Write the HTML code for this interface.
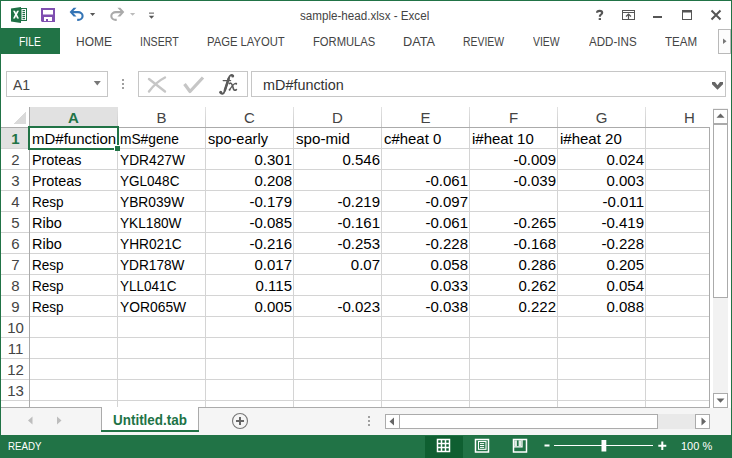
<!DOCTYPE html>
<html><head><meta charset="utf-8">
<style>
html,body{margin:0;padding:0}
body{width:732px;height:458px;overflow:hidden;position:relative;background:#fff;font-family:"Liberation Sans", sans-serif}
div{position:absolute;white-space:nowrap}
.hd{height:20px;line-height:23px;text-align:center;font-size:15px;line-height:21px}
.rh{left:1px;width:29px;height:20px;line-height:23px;text-align:center;font-size:15px;line-height:21px}
.c{height:20px;line-height:22px;font-size:15px;color:#000}
.tab{top:29px;height:26px;line-height:27px;font-size:12.5px;color:#444}
</style></head><body>
<svg width="732" height="458" style="position:absolute;left:0;top:0" shape-rendering="crispEdges">
<defs><linearGradient id="hg" x1="0" y1="0" x2="0" y2="1"><stop offset="0" stop-color="#e2e2e2"/><stop offset="1" stop-color="#cccccc"/></linearGradient></defs>
<rect x="30" y="107" width="87" height="20" fill="#e1e1e1"/><rect x="0" y="128" width="29" height="20" fill="#e1e1e1"/><polygon points="26,111 26,124 13,124" fill="#dadada"/><rect x="0" y="148" width="29" height="1" fill="#d4d4d4"/><rect x="30" y="148" width="679" height="1" fill="#d4d4d4"/><rect x="0" y="169" width="29" height="1" fill="#d4d4d4"/><rect x="30" y="169" width="679" height="1" fill="#d4d4d4"/><rect x="0" y="190" width="29" height="1" fill="#d4d4d4"/><rect x="30" y="190" width="679" height="1" fill="#d4d4d4"/><rect x="0" y="211" width="29" height="1" fill="#d4d4d4"/><rect x="30" y="211" width="679" height="1" fill="#d4d4d4"/><rect x="0" y="232" width="29" height="1" fill="#d4d4d4"/><rect x="30" y="232" width="679" height="1" fill="#d4d4d4"/><rect x="0" y="253" width="29" height="1" fill="#d4d4d4"/><rect x="30" y="253" width="679" height="1" fill="#d4d4d4"/><rect x="0" y="274" width="29" height="1" fill="#d4d4d4"/><rect x="30" y="274" width="679" height="1" fill="#d4d4d4"/><rect x="0" y="295" width="29" height="1" fill="#d4d4d4"/><rect x="30" y="295" width="679" height="1" fill="#d4d4d4"/><rect x="0" y="316" width="29" height="1" fill="#d4d4d4"/><rect x="30" y="316" width="679" height="1" fill="#d4d4d4"/><rect x="0" y="337" width="29" height="1" fill="#d4d4d4"/><rect x="30" y="337" width="679" height="1" fill="#d4d4d4"/><rect x="0" y="358" width="29" height="1" fill="#d4d4d4"/><rect x="30" y="358" width="679" height="1" fill="#d4d4d4"/><rect x="0" y="379" width="29" height="1" fill="#d4d4d4"/><rect x="30" y="379" width="679" height="1" fill="#d4d4d4"/><rect x="0" y="400" width="29" height="1" fill="#d4d4d4"/><rect x="30" y="400" width="679" height="1" fill="#d4d4d4"/><rect x="117" y="107" width="1" height="20" fill="url(#hg)"/><rect x="117" y="128" width="1" height="279" fill="#d4d4d4"/><rect x="205" y="107" width="1" height="20" fill="url(#hg)"/><rect x="205" y="128" width="1" height="279" fill="#d4d4d4"/><rect x="293" y="107" width="1" height="20" fill="url(#hg)"/><rect x="293" y="128" width="1" height="279" fill="#d4d4d4"/><rect x="381" y="107" width="1" height="20" fill="url(#hg)"/><rect x="381" y="128" width="1" height="279" fill="#d4d4d4"/><rect x="469" y="107" width="1" height="20" fill="url(#hg)"/><rect x="469" y="128" width="1" height="279" fill="#d4d4d4"/><rect x="557" y="107" width="1" height="20" fill="url(#hg)"/><rect x="557" y="128" width="1" height="279" fill="#d4d4d4"/><rect x="645" y="107" width="1" height="20" fill="url(#hg)"/><rect x="645" y="128" width="1" height="279" fill="#d4d4d4"/><rect x="0" y="127" width="710" height="1" fill="#ababab"/><rect x="29" y="107" width="1" height="300" fill="#ababab"/><rect x="709" y="127" width="1" height="280" fill="#ababab"/><rect x="0" y="407" width="710" height="1" fill="#ababab"/><rect x="28" y="126" width="91" height="2" fill="#217346"/><rect x="28" y="148" width="86" height="2" fill="#217346"/><rect x="28" y="126" width="2" height="24" fill="#217346"/><rect x="117" y="126" width="2" height="19" fill="#217346"/><rect x="114" y="145" width="6" height="6" fill="#fff"/><rect x="115" y="146" width="5" height="5" fill="#217346"/>
</svg>
<div style="left:0;top:0;width:730px;height:458px;border-left:1px solid #217346;border-right:1px solid #217346;border-top:1px solid #217346;box-sizing:content-box"></div>
<svg width="732" height="60" style="position:absolute;left:0;top:0">
<!-- excel icon -->
<path d="M11,8.5 L21,7 L21,23 L11,21.5 Z" fill="#1e7145"/>
<rect x="21" y="8" width="6" height="13" fill="#1e7145"/>
<rect x="21.5" y="9" width="4.5" height="11" fill="#fff"/>
<g fill="#1e7145"><rect x="22.5" y="10" width="2.5" height="1.2"/><rect x="22.5" y="12" width="2.5" height="1.2"/><rect x="22.5" y="14" width="2.5" height="1.2"/><rect x="22.5" y="16" width="2.5" height="1.2"/><rect x="22.5" y="18" width="2.5" height="1.2"/></g>
<path d="M13,10.7 L15,10.7 L16,13 L17,10.7 L19,10.7 L17,14.5 L19,18.4 L17,18.4 L16,16 L15,18.4 L13,18.4 L15,14.5 Z" fill="#fff"/>
<!-- save -->
<path d="M41,8 H55 V22 H42 L41,21 Z M43,10 V14.5 H53 V10 Z M44,17 V21 H46 V19 H48 V21 H52 V17 Z" fill="#7f4fb0" fill-rule="evenodd"/>
<!-- undo -->
<path d="M72.8,12.1 H78 A4.6,3.9 0 0 1 78,19.9 H77.2" fill="none" stroke="#3474b5" stroke-width="2.1"/>
<path d="M69.6,12.1 L73.6,7.7 L76.5,7.7 L73.4,11 L73.4,13.2 L76.5,16.5 L73.6,16.5 Z" fill="#3474b5"/>
<path d="M90,13 H95.2 L92.6,16 Z" fill="#555"/>
<!-- redo -->
<g transform="translate(193.9,0) scale(-1,1)">
<path d="M72.8,12.1 H78 A4.6,3.9 0 0 1 78,19.9 H77.2" fill="none" stroke="#aaaaaa" stroke-width="2.1"/>
<path d="M69.6,12.1 L73.6,7.7 L76.5,7.7 L73.4,11 L73.4,13.2 L76.5,16.5 L73.6,16.5 Z" fill="#aaaaaa"/>
</g>
<path d="M130,13 H135.2 L132.6,15.8 Z" fill="#bbb"/>
<!-- customize -->
<rect x="149" y="12.6" width="5" height="1" fill="#555"/>
<path d="M148.8,15.8 H154.2 L151.5,18.8 Z" fill="#555"/>
<!-- help ? -->
<path d="M597,12.8 C597,11 598.2,10.9 599.6,10.9 C601.2,10.9 602.2,11.6 602.2,12.8 C602.2,14.3 600.2,14.6 599.9,16 V16.8" fill="none" stroke="#555" stroke-width="2.1"/><rect x="598.7" y="18.1" width="2.3" height="1.9" fill="#555"/>
<!-- ribbon display options -->
<rect x="622.5" y="10.5" width="12" height="9" fill="none" stroke="#555" stroke-width="1"/>
<rect x="623" y="12" width="11" height="1" fill="#555"/>
<path d="M628.5,14 V19.5 M626,16.5 L628.5,14 L631,16.5" fill="none" stroke="#555" stroke-width="1.2"/>
<!-- minimize -->
<rect x="653" y="16" width="9" height="2" fill="#555"/>
<!-- maximize -->
<rect x="682.5" y="10.5" width="9" height="9" fill="none" stroke="#555" stroke-width="1"/>
<rect x="682" y="10" width="10" height="2.5" fill="#555"/>
<!-- close -->
<path d="M711.5,10.5 L720.5,19.5 M720.5,10.5 L711.5,19.5" stroke="#555" stroke-width="2"/>
</svg>
<div style="left:300px;top:8px;font-size:12.5px;color:#444;line-height:16px;transform:scaleX(0.93);transform-origin:0 0" id="title">sample-head.xlsx - Excel</div>
<div style="left:0;top:28px;width:60px;height:26px;background:#217346"></div>
<div class="tab" style="left:19.3px;color:#fff;transform:scaleX(0.824);transform-origin:0 0">FILE</div>
<div class="tab" style="left:76.3px;color:#444;transform:scaleX(0.956);transform-origin:0 0">HOME</div>
<div class="tab" style="left:140px;color:#444;transform:scaleX(0.848);transform-origin:0 0">INSERT</div>
<div class="tab" style="left:207.3px;color:#444;transform:scaleX(0.9);transform-origin:0 0">PAGE LAYOUT</div>
<div class="tab" style="left:313px;color:#444;transform:scaleX(0.897);transform-origin:0 0">FORMULAS</div>
<div class="tab" style="left:403px;color:#444;transform:scaleX(1.02);transform-origin:0 0">DATA</div>
<div class="tab" style="left:463px;color:#444;transform:scaleX(0.833);transform-origin:0 0">REVIEW</div>
<div class="tab" style="left:533px;color:#444;transform:scaleX(0.834);transform-origin:0 0">VIEW</div>
<div class="tab" style="left:589px;color:#444;transform:scaleX(0.927);transform-origin:0 0">ADD-INS</div>
<div class="tab" style="left:665.1px;color:#444;transform:scaleX(0.924);transform-origin:0 0">TEAM</div>
<div style="left:718px;top:29px;width:11px;height:23px;border:1px solid #b9b9b9;background:#fcfcfc"></div>
<svg width="6" height="8" style="position:absolute;left:722px;top:37px"><path d="M1,1.5 L4.5,4.3 L1,7.1 Z" fill="#777"/></svg>
<div style="left:6px;top:71px;width:100px;height:24px;border:1px solid #c6c6c6;background:#fff"></div>
<div style="left:13px;top:76px;font-size:14px;line-height:18px;color:#444" id="a1">A1</div>
<svg width="10" height="6" style="position:absolute;left:93px;top:80px"><path d="M0.8,1 H7.8 L4.3,5.4 Z" fill="#777"/></svg>
<svg width="4" height="12" style="position:absolute;left:122px;top:79px"><g fill="#a0a0a0"><rect x="0" y="0" width="2" height="2"/><rect x="0" y="4" width="2" height="2"/><rect x="0" y="8" width="2" height="2"/></g></svg>
<div style="left:138px;top:71px;width:108px;height:24px;border:1px solid #c6c6c6;background:#fff"></div>
<svg width="110" height="30" style="position:absolute;left:138px;top:68px">
<path d="M11,11 L27,23.5 M27,9.5 C20,13 15,18 11,23.5" fill="none" stroke="#c6c6c6" stroke-width="2.4" stroke-linecap="round"/>
<path d="M46.5,16 L52,23.5 L65,9.5" fill="none" stroke="#c6c6c6" stroke-width="3.2" stroke-linejoin="round"/>
</svg>
<svg width="732" height="120" style="position:absolute;left:0;top:0">
<g fill="none" stroke="#5a5a5a" stroke-linecap="round">
<path d="M220.6,92.2 C221.2,94.6 223.6,94.4 224.6,91.2 L228.9,77.8 C229.7,75.2 231.4,74.3 232.9,75.6" stroke-width="1.9"/>
<path d="M223.2,80.6 H230.6" stroke-width="1.3"/>
<path d="M224.9,90.2 L228.6,78.8" stroke-width="2.5"/>
<path d="M229.2,83.6 C230.6,82.6 231.8,83.2 232.6,86 L233.4,88.8 C233.9,90.6 235.3,90.6 236.4,89.6" stroke-width="1.6"/>
<path d="M236.4,83.6 C235,83 233.8,83.8 231.6,86.8 L229.6,89.6" stroke-width="1.2"/>
</g>
<g fill="#5a5a5a"><circle cx="220.7" cy="92.3" r="1.5"/><circle cx="232.7" cy="76" r="1.5"/><circle cx="236.2" cy="83.8" r="1"/><circle cx="229.6" cy="89.8" r="1"/></g>
</svg>
<div style="left:251px;top:71px;width:473px;height:24px;border:1px solid #c6c6c6;background:#fff"></div>
<div style="left:263px;top:76px;font-size:14.4px;line-height:18px;color:#333" id="fx">mD#function</div>
<svg width="732" height="100" style="position:absolute;left:0;top:0"><path d="M712,82 H715 L717.5,85.2 L720,82 H723 V84.2 L717.5,89.8 L712,84.2 Z" fill="#666"/></svg>
<div style="left:713px;top:108px;width:15px;height:300px;background:#f2f2f2"></div>
<div style="left:713px;top:109px;width:13px;height:13px;border:1px solid #ababab;background:#fff"></div>
<svg width="10" height="6" style="position:absolute;left:716px;top:113px"><path d="M0.5,4.8 H8.5 L4.5,0.5 Z" fill="#666"/></svg>
<div style="left:713px;top:124px;width:13px;height:172px;border:1px solid #ababab;background:#fff"></div>
<div style="left:713px;top:393px;width:13px;height:13px;border:1px solid #ababab;background:#fff"></div>
<svg width="10" height="6" style="position:absolute;left:716px;top:398px"><path d="M0.5,0.5 H8.5 L4.5,4.8 Z" fill="#666"/></svg>
<div style="left:1px;top:408px;width:730px;height:27px;background:#f5f5f5"></div>
<svg width="40" height="12" style="position:absolute;left:25px;top:415px"><path d="M7.5,1.5 L3,5.5 L7.5,9.5 Z" fill="#bdbdbd"/><path d="M32,1.5 L36.5,5.5 L32,9.5 Z" fill="#bdbdbd"/></svg>
<div style="left:101px;top:407px;width:96px;height:23px;border-left:1px solid #ababab;border-right:1px solid #ababab;background:#fff"></div>
<div style="left:101px;top:430px;width:98px;height:2px;background:#217346"></div>
<div style="left:113px;top:411px;font-size:14px;transform:scaleX(0.96);transform-origin:0 0;line-height:18px;font-weight:bold;color:#217346" id="sheettab">Untitled.tab</div>
<svg width="20" height="20" style="position:absolute;left:230px;top:411px"><circle cx="10" cy="10" r="7.5" fill="none" stroke="#777" stroke-width="1.1"/><path d="M10,6 V14 M6,10 H14" stroke="#666" stroke-width="2"/></svg>
<svg width="4" height="12" style="position:absolute;left:368px;top:416px"><g fill="#a0a0a0"><rect x="0" y="0" width="2" height="2"/><rect x="0" y="4" width="2" height="2"/><rect x="0" y="8" width="2" height="2"/></g></svg>
<div style="left:385px;top:414px;width:324px;height:15px;background:#e9e9e9"></div>
<div style="left:385px;top:414px;width:13px;height:13px;border:1px solid #ababab;background:#fff"></div>
<svg width="8" height="10" style="position:absolute;left:388px;top:417px"><path d="M6,0.5 V8.5 L1.5,4.5 Z" fill="#666"/></svg>
<div style="left:399px;top:414px;width:257px;height:13px;border:1px solid #ababab;background:#fff"></div>
<div style="left:695px;top:414px;width:13px;height:13px;border:1px solid #ababab;background:#fff"></div>
<svg width="8" height="10" style="position:absolute;left:700px;top:417px"><path d="M1.5,0.5 V8.5 L6,4.5 Z" fill="#666"/></svg>
<div style="left:0;top:435px;width:732px;height:23px;background:#217346"></div>
<div style="left:8px;top:438px;font-size:11px;line-height:16px;color:#fff;transform:scaleX(0.885);transform-origin:0 0" id="ready">READY</div>
<div style="left:425px;top:436px;width:38px;height:22px;background:#0f5f31"></div>
<svg width="300" height="23" style="position:absolute;left:420px;top:435px">
<g fill="none" stroke="#fff" stroke-width="1.5">
<rect x="17.5" y="4.5" width="12" height="12"/><path d="M21.5,4.5 V16.5 M25.5,4.5 V16.5 M17.5,8.5 H29.5 M17.5,12.5 H29.5"/>
<rect x="55.5" y="4.5" width="13" height="12.5"/><rect x="58.5" y="6.5" width="7.5" height="7.8" stroke-width="1.1"/>
<rect x="93.5" y="4.5" width="13" height="12.5"/><path d="M93.5,11.8 H102 V4.5" stroke-width="1.3"/>
</g>
<path d="M60,8.6 H64.2 M60,10.5 H64.2 M60,12.4 H64.2" stroke="#fff" stroke-width="1"/>
<rect x="94.3" y="5.3" width="2.6" height="6" fill="#e4eee8"/>
<rect x="98.6" y="5.3" width="2.6" height="6" fill="#e4eee8"/>
<rect x="124.5" y="9.5" width="5" height="2" fill="#fff"/>
<rect x="134" y="10" width="99" height="1" fill="#fff"/>
<rect x="181.5" y="5" width="4.8" height="11.5" fill="#fff"/>
<path d="M238.3,10.8 H246.3 M242.3,6.6 V14.9" stroke="#fff" stroke-width="2"/>
</svg>
<div style="left:681px;top:438px;font-size:11px;line-height:16px;color:#fff" id="zoom">100 %</div>
<div class="hd" style="left:30px;top:107px;width:87px;color:#217346;font-weight:bold">A</div>
<div class="hd" style="left:118px;top:107px;width:87px;color:#444;font-weight:normal">B</div>
<div class="hd" style="left:206px;top:107px;width:87px;color:#444;font-weight:normal">C</div>
<div class="hd" style="left:294px;top:107px;width:87px;color:#444;font-weight:normal">D</div>
<div class="hd" style="left:382px;top:107px;width:87px;color:#444;font-weight:normal">E</div>
<div class="hd" style="left:470px;top:107px;width:87px;color:#444;font-weight:normal">F</div>
<div class="hd" style="left:558px;top:107px;width:87px;color:#444;font-weight:normal">G</div>
<div class="hd" style="left:646px;top:107px;width:87px;color:#444;font-weight:normal">H</div>
<div class="rh" style="top:128px;color:#217346;font-weight:bold">1</div>
<div class="rh" style="top:149px;color:#444;font-weight:normal">2</div>
<div class="rh" style="top:170px;color:#444;font-weight:normal">3</div>
<div class="rh" style="top:191px;color:#444;font-weight:normal">4</div>
<div class="rh" style="top:212px;color:#444;font-weight:normal">5</div>
<div class="rh" style="top:233px;color:#444;font-weight:normal">6</div>
<div class="rh" style="top:254px;color:#444;font-weight:normal">7</div>
<div class="rh" style="top:275px;color:#444;font-weight:normal">8</div>
<div class="rh" style="top:296px;color:#444;font-weight:normal">9</div>
<div class="rh" style="top:317px;color:#444;font-weight:normal">10</div>
<div class="rh" style="top:338px;color:#444;font-weight:normal">11</div>
<div class="rh" style="top:359px;color:#444;font-weight:normal">12</div>
<div class="rh" style="top:380px;color:#444;font-weight:normal">13</div>
<div class="c" style="left:32px;top:128px">mD#function</div>
<div class="c" style="left:120px;top:128px;transform:scaleX(0.9159);transform-origin:0 0">mS#gene</div>
<div class="c" style="left:208px;top:128px;transform:scaleX(0.9721);transform-origin:0 0">spo-early</div>
<div class="c" style="left:296px;top:128px;transform:scaleX(1.0098);transform-origin:0 0">spo-mid</div>
<div class="c" style="left:384px;top:128px;transform:scaleX(0.9946);transform-origin:0 0">c#heat 0</div>
<div class="c" style="left:472px;top:128px">i#heat 10</div>
<div class="c" style="left:560px;top:128px">i#heat 20</div>
<div class="c" style="left:32px;top:149px;transform:scaleX(0.958);transform-origin:0 0">Proteas</div>
<div class="c" style="left:120px;top:149px;transform:scaleX(0.9157);transform-origin:0 0">YDR427W</div>
<div class="c" style="left:206px;top:149px;width:86px;text-align:right">0.301</div>
<div class="c" style="left:294px;top:149px;width:86px;text-align:right">0.546</div>
<div class="c" style="left:470px;top:149px;width:86px;text-align:right">-0.009</div>
<div class="c" style="left:558px;top:149px;width:86px;text-align:right">0.024</div>
<div class="c" style="left:32px;top:170px;transform:scaleX(0.958);transform-origin:0 0">Proteas</div>
<div class="c" style="left:120px;top:170px;transform:scaleX(0.9016);transform-origin:0 0">YGL048C</div>
<div class="c" style="left:206px;top:170px;width:86px;text-align:right">0.208</div>
<div class="c" style="left:382px;top:170px;width:86px;text-align:right">-0.061</div>
<div class="c" style="left:470px;top:170px;width:86px;text-align:right">-0.039</div>
<div class="c" style="left:558px;top:170px;width:86px;text-align:right">0.003</div>
<div class="c" style="left:32px;top:191px;transform:scaleX(0.9029);transform-origin:0 0">Resp</div>
<div class="c" style="left:120px;top:191px;transform:scaleX(0.9159);transform-origin:0 0">YBR039W</div>
<div class="c" style="left:206px;top:191px;width:86px;text-align:right">-0.179</div>
<div class="c" style="left:294px;top:191px;width:86px;text-align:right">-0.219</div>
<div class="c" style="left:382px;top:191px;width:86px;text-align:right">-0.097</div>
<div class="c" style="left:558px;top:191px;width:86px;text-align:right">-0.011</div>
<div class="c" style="left:32px;top:212px;transform:scaleX(0.9638);transform-origin:0 0">Ribo</div>
<div class="c" style="left:120px;top:212px;transform:scaleX(0.9104);transform-origin:0 0">YKL180W</div>
<div class="c" style="left:206px;top:212px;width:86px;text-align:right">-0.085</div>
<div class="c" style="left:294px;top:212px;width:86px;text-align:right">-0.161</div>
<div class="c" style="left:382px;top:212px;width:86px;text-align:right">-0.061</div>
<div class="c" style="left:470px;top:212px;width:86px;text-align:right">-0.265</div>
<div class="c" style="left:558px;top:212px;width:86px;text-align:right">-0.419</div>
<div class="c" style="left:32px;top:233px;transform:scaleX(0.9638);transform-origin:0 0">Ribo</div>
<div class="c" style="left:120px;top:233px;transform:scaleX(0.9136);transform-origin:0 0">YHR021C</div>
<div class="c" style="left:206px;top:233px;width:86px;text-align:right">-0.216</div>
<div class="c" style="left:294px;top:233px;width:86px;text-align:right">-0.253</div>
<div class="c" style="left:382px;top:233px;width:86px;text-align:right">-0.228</div>
<div class="c" style="left:470px;top:233px;width:86px;text-align:right">-0.168</div>
<div class="c" style="left:558px;top:233px;width:86px;text-align:right">-0.228</div>
<div class="c" style="left:32px;top:254px;transform:scaleX(0.9029);transform-origin:0 0">Resp</div>
<div class="c" style="left:120px;top:254px;transform:scaleX(0.91);transform-origin:0 0">YDR178W</div>
<div class="c" style="left:206px;top:254px;width:86px;text-align:right">0.017</div>
<div class="c" style="left:294px;top:254px;width:86px;text-align:right">0.07</div>
<div class="c" style="left:382px;top:254px;width:86px;text-align:right">0.058</div>
<div class="c" style="left:470px;top:254px;width:86px;text-align:right">0.286</div>
<div class="c" style="left:558px;top:254px;width:86px;text-align:right">0.205</div>
<div class="c" style="left:32px;top:275px;transform:scaleX(0.9029);transform-origin:0 0">Resp</div>
<div class="c" style="left:120px;top:275px;transform:scaleX(0.9016);transform-origin:0 0">YLL041C</div>
<div class="c" style="left:206px;top:275px;width:86px;text-align:right">0.115</div>
<div class="c" style="left:382px;top:275px;width:86px;text-align:right">0.033</div>
<div class="c" style="left:470px;top:275px;width:86px;text-align:right">0.262</div>
<div class="c" style="left:558px;top:275px;width:86px;text-align:right">0.054</div>
<div class="c" style="left:32px;top:296px;transform:scaleX(0.9029);transform-origin:0 0">Resp</div>
<div class="c" style="left:120px;top:296px;transform:scaleX(0.9225);transform-origin:0 0">YOR065W</div>
<div class="c" style="left:206px;top:296px;width:86px;text-align:right">0.005</div>
<div class="c" style="left:294px;top:296px;width:86px;text-align:right">-0.023</div>
<div class="c" style="left:382px;top:296px;width:86px;text-align:right">-0.038</div>
<div class="c" style="left:470px;top:296px;width:86px;text-align:right">0.222</div>
<div class="c" style="left:558px;top:296px;width:86px;text-align:right">0.088</div>
</body></html>
